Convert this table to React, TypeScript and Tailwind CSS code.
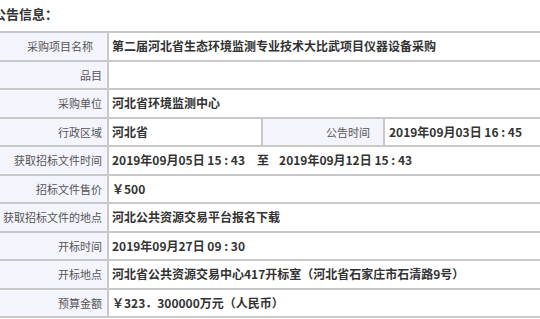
const font = { fontFamily: '"Noto Sans CJK SC", "Liberation Sans", sans-serif' };

type Row = {
  label: string;
  value: React.ReactNode;
  label2?: string;
  value2?: string;
  extraPad?: boolean;
};

const rows: Row[] = [
  { label: '采购项目名称', value: '第二届河北省生态环境监测专业技术大比武项目仪器设备采购', extraPad: true },
  { label: '品目', value: '' },
  { label: '采购单位', value: '河北省环境监测中心' },
  { label: '行政区域', value: '河北省', label2: '公告时间', value2: '2019年09月03日 16 : 45' },
  {
    label: '获取招标文件时间',
    value: (
      <>
        2019年09月05日 15 : 43<span className="ml-[12px] mr-[10px]">至</span>2019年09月12日 15 : 43
      </>
    ),
  },
  { label: '招标文件售价', value: '￥500' },
  { label: '获取招标文件的地点', value: '河北公共资源交易平台报名下载' },
  { label: '开标时间', value: '2019年09月27日 09 : 30' },
  { label: '开标地点', value: '河北省公共资源交易中心417开标室（河北省石家庄市石清路9号）' },
  { label: '预算金额', value: '￥323．300000万元（人民币）' },
];

function Label({ text, className = '' }: { text: string; className?: string }) {
  return (
    <div
      className={`flex items-center justify-end bg-[#f3f4fc] border-r-2 border-[#c8c8c8] pr-[5px] text-[11px] text-[#555] ${className}`}
    >
      {text}
    </div>
  );
}

export default function App() {
  return (
    <div className="w-[540px] h-[319px] overflow-hidden bg-white" style={font}>
      <div className="ml-[-8px] w-[760px]">
        <div className="h-[31px] pt-[6px] pl-[1px] text-[13px] leading-[16px] font-bold text-[#333]">公告信息：</div>
        <div className="border-t-2 border-[#c8c8c8]">
          {rows.map((r) => (
            <div key={r.label} className="flex h-[28.5px] border-b-2 border-[#c8c8c8]">
              <Label text={r.label} className={`w-[117px] shrink-0 ${r.extraPad ? 'pr-[14px]' : ''}`} />
              {r.label2 ? (
                <>
                  <div className="w-[154px] shrink-0 flex items-center pl-[3px] border-r-2 border-[#c8c8c8] text-[12px] font-bold text-[#333]">
                    {r.value}
                  </div>
                  <Label text={r.label2} className="w-[122px] shrink-0 pr-[13px]" />
                  <div className="flex-1 flex items-center pl-[4px] text-[12px] font-bold text-[#333] whitespace-pre">{r.value2}</div>
                </>
              ) : (
                <div className="flex-1 flex items-center pl-[3px] text-[12px] font-bold text-[#333] whitespace-pre">
                  {r.value}
                </div>
              )}
            </div>
          ))}
        </div>
      </div>
    </div>
  );
}
